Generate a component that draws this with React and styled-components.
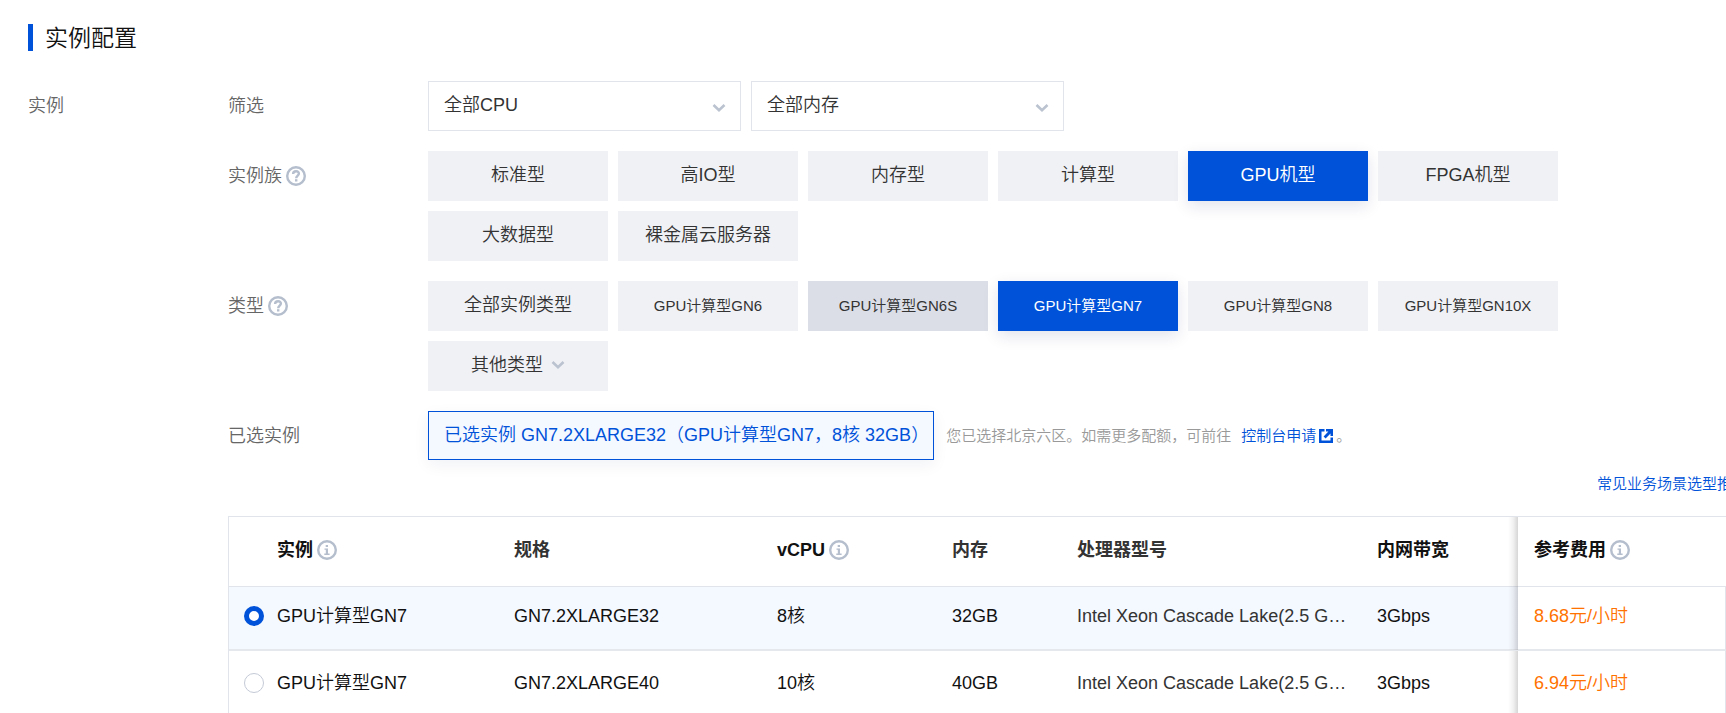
import React, { useState } from "react";
import styled, { createGlobalStyle, css } from "styled-components";

const GlobalStyle = createGlobalStyle`
  * { box-sizing: border-box; }
  html { scrollbar-width: none; }
  body {
    margin: 0;
    overflow-x: hidden;
    background: #fff;
    color: #333;
    font-family: "Liberation Sans", "Noto Sans CJK SC", sans-serif;
    font-size: 18px;
    font-weight: 350;
    line-height: 24px;
  }
  button, select, input { font: inherit; color: inherit; }
`;

const Page = styled.main`
  padding: 24px 0 0 28px;
`;

const Title = styled.h1`
  display: flex;
  align-items: center;
  margin: 0 0 30px;
  padding: 2px 0 0 12px;
  border-left: 5px solid #0052d9;
  height: 27px;
  font-size: 23px;
  font-weight: inherit;
  line-height: 27px;
  color: #111;
`;

const Section = styled.section`
  display: grid;
  grid-template-columns: 200px minmax(0, 1fr);
`;

const Label = styled.div`
  display: flex;
  align-items: center;
  gap: 4px;
  height: 50px;
  color: #666;
`;

const FormRow = styled.div`
  display: grid;
  grid-template-columns: 200px minmax(0, 1fr);
  margin-bottom: 20px;
`;

const Options = styled.div`
  display: flex;
  flex-wrap: wrap;
  gap: 10px;
  max-width: 1140px;
`;

const SelectBox = styled.label`
  position: relative;
  width: 313px;
  svg {
    position: absolute;
    right: 15px;
    top: 22px;
    pointer-events: none;
  }
`;

const Select = styled.select`
  appearance: none;
  display: block;
  width: 100%;
  height: 50px;
  padding: 0 40px 2px 15px;
  border: 1px solid #e1e4eb;
  border-radius: 0;
  background: #fff;
`;

const Chip = styled.button`
  display: flex;
  align-items: center;
  justify-content: center;
  gap: 8px;
  width: 180px;
  height: 50px;
  padding: 0 0 2px;
  border: 0;
  background: #f0f1f5;
  cursor: pointer;
  white-space: nowrap;
  ${(p) => p.$small && css`font-size: 15px; padding: 0;`}
  ${(p) => p.$hovered && css`background: #dcdee7;`}
  ${(p) => p.$active && css`
    background: #0052d9;
    color: #fff;
    box-shadow: 0 5px 15px rgba(3, 27, 108, 0.12);
  `}
`;

const SelectedLine = styled.div`
  display: flex;
  align-items: center;
  align-self: start;
  gap: 12px;
`;

const SelectedTag = styled.output`
  height: 49px;
  padding: 0 4px 0 15px;
  border: 1px solid #0052d9;
  background: #f4f8ff;
  color: #0052d9;
  line-height: 46px;
  white-space: nowrap;
  box-shadow: 0 5px 15px rgba(3, 27, 108, 0.06);
`;

const Note = styled.p`
  display: flex;
  align-items: center;
  margin: 0;
  font-size: 15px;
  color: #999;
  white-space: nowrap;
`;

const Link = styled.a`
  display: inline-flex;
  align-items: center;
  gap: 3px;
  color: #0052d9;
  font-size: 15px;
  text-decoration: none;
  white-space: nowrap;
`;

const NoteLink = styled(Link)`
  margin: 0 3px 0 10px;
`;

const Guide = styled.div`
  display: flex;
  justify-content: flex-end;
  margin: -9px -21px 20px 0;
`;

const Table = styled.table`
  width: 100%;
  table-layout: fixed;
  border-collapse: separate;
  border-spacing: 0;
  border: solid #e1e4eb;
  border-width: 1px 0 0 1px;
`;

const Col = styled.col`
  width: ${(p) => p.$width};
`;

const HeadCell = styled.th`
  height: 70px;
  padding: 0 0 3px;
  border-bottom: 1px solid #e1e4eb;
  text-align: left;
  font-weight: 700;
  color: ${(p) => (p.$strong ? "#111" : "#333")};
`;

const HeadInner = styled.span`
  display: flex;
  align-items: center;
  gap: 4px;
`;

const Cell = styled.td`
  padding: 0 0 ${(p) => (p.$selected ? 4 : 2)}px;
  border-bottom: 2px solid #e5e8ed;
  color: ${(p) => (p.$strong ? "#111" : "#333")};
`;

const pinned = css`
  position: relative;
  padding-left: 16px;
  background: #fff;
  &::before {
    content: "";
    position: absolute;
    top: 0;
    bottom: -1px;
    left: -10px;
    width: 10px;
    background: linear-gradient(to right, rgba(0, 0, 0, 0), rgba(0, 0, 0, 0.05) 50%, rgba(0, 0, 0, 0.16));
  }
`;

const PinnedHead = styled(HeadCell)`
  ${pinned}
`;

const PinnedCell = styled(Cell)`
  ${pinned}
  border-right: 1px solid #e1e4eb;
  color: #ff7200;
`;

const Row = styled.tr`
  height: ${(p) => (p.$selected ? "64px" : "68px")};
  background: ${(p) => (p.$selected ? "#f4f8ff" : "#fff")};
`;

const FirstHead = styled(HeadCell)`
  padding-left: 48px;
`;

const RadioLabel = styled.label`
  display: flex;
  align-items: center;
  gap: 13px;
  padding-left: 15px;
`;

const Radio = styled.input`
  appearance: none;
  width: 20px;
  height: 20px;
  margin: 0;
  border: 1px solid #c4cad6;
  border-radius: 50%;
  background: #fff;
  &:checked { border: 5px solid #0052d9; }
`;

const Ellipsis = styled.div`
  margin-right: 24px;
  overflow: hidden;
  text-overflow: ellipsis;
  white-space: nowrap;
`;

const Chevron = () => (
  <svg width="14" height="10" viewBox="0 0 14 10" fill="none" aria-hidden="true">
    <path d="M1.5 2L7 7.3L12.5 2" stroke="#bbc3d0" strokeWidth="2.6" />
  </svg>
);

const HelpIcon = () => (
  <svg width="20" height="20" viewBox="0 0 20 20" fill="none" aria-hidden="true">
    <circle cx="10" cy="10" r="8.8" stroke="#b4becd" strokeWidth="2.4" />
    <path d="M7.1 8.1C7.1 6.2 8.3 5.3 10.1 5.3C11.9 5.3 12.9 6.2 12.9 7.6C12.9 9.5 10.2 9.8 10.2 12.2" stroke="#b4becd" strokeWidth="2.4" />
    <rect x="9" y="13.2" width="2.4" height="2.3" fill="#b4becd" />
  </svg>
);

const InfoIcon = () => (
  <svg width="20" height="20" viewBox="0 0 20 20" fill="none" aria-hidden="true">
    <circle cx="10" cy="10" r="8.8" stroke="#b4becd" strokeWidth="2.4" />
    <path d="M8.7 5H11V7H8.7ZM7.5 8.4H11V13.4H12.6V14.9H7.3V13.4H8.8V9.8H7.5Z" fill="#b4becd" />
  </svg>
);

const ExternalIcon = () => (
  <svg width="14" height="14" viewBox="0 0 14 14" fill="none" aria-hidden="true">
    <path d="M0 0H5.5V2.5H2.5V11.5H11.5V8.5H14V14H0Z" fill="#0052d9" />
    <path d="M7 0H14V7H11.5V4.6L6.6 9.4L4.6 7.4L9.4 2.5H7Z" fill="#0052d9" />
  </svg>
);

const families = ["标准型", "高IO型", "内存型", "计算型", "GPU机型", "FPGA机型", "大数据型", "裸金属云服务器"];
const types = ["GPU计算型GN6", "GPU计算型GN6S", "GPU计算型GN7", "GPU计算型GN8", "GPU计算型GN10X"];
const instances = [
  { family: "GPU计算型GN7", spec: "GN7.2XLARGE32", cpu: "8核", memory: "32GB", processor: "Intel Xeon Cascade Lake(2.5 GHz)", bandwidth: "3Gbps", price: "8.68元/小时" },
  { family: "GPU计算型GN7", spec: "GN7.2XLARGE40", cpu: "10核", memory: "40GB", processor: "Intel Xeon Cascade Lake(2.5 GHz)", bandwidth: "3Gbps", price: "6.94元/小时" },
];

export default function App() {
  const [family, setFamily] = useState("GPU机型");
  const [type, setType] = useState("GPU计算型GN7");
  const [selected, setSelected] = useState("GN7.2XLARGE32");

  return (
    <Page>
      <GlobalStyle />
      <Title>实例配置</Title>
      <Section>
        <Label>实例</Label>
        <div>
          <FormRow>
            <Label>筛选</Label>
            <Options>
              <SelectBox>
                <Select aria-label="CPU"><option>全部CPU</option></Select>
                <Chevron />
              </SelectBox>
              <SelectBox>
                <Select aria-label="内存"><option>全部内存</option></Select>
                <Chevron />
              </SelectBox>
            </Options>
          </FormRow>
          <FormRow>
            <Label>实例族<HelpIcon /></Label>
            <Options>
              {families.map((name) => (
                <Chip key={name} type="button" $active={name === family} onClick={() => setFamily(name)}>{name}</Chip>
              ))}
            </Options>
          </FormRow>
          <FormRow>
            <Label>类型<HelpIcon /></Label>
            <Options>
              <Chip type="button">全部实例类型</Chip>
              {types.map((name) => (
                <Chip
                  key={name}
                  type="button"
                  $small
                  $hovered={name === "GPU计算型GN6S"}
                  $active={name === type}
                  onClick={() => setType(name)}
                >
                  {name}
                </Chip>
              ))}
              <Chip type="button">其他类型<Chevron /></Chip>
            </Options>
          </FormRow>
          <FormRow>
            <Label>已选实例</Label>
            <SelectedLine>
              <SelectedTag>已选实例 GN7.2XLARGE32（GPU计算型GN7，8核 32GB）</SelectedTag>
              <Note>
                您已选择北京六区。如需更多配额，可前往
                <NoteLink href="#console">控制台申请<ExternalIcon /></NoteLink>。
              </Note>
            </SelectedLine>
          </FormRow>
          <Guide><Link href="#guide">常见业务场景选型推荐</Link></Guide>
          <Table>
            <colgroup>
              <Col $width="285px" />
              <Col $width="auto" />
              <Col $width="175px" />
              <Col $width="125px" />
              <Col $width="300px" />
              <Col $width="141px" />
              <Col $width="208px" />
            </colgroup>
            <thead>
              <tr>
                <FirstHead $strong><HeadInner>实例<InfoIcon /></HeadInner></FirstHead>
                <HeadCell>规格</HeadCell>
                <HeadCell $strong><HeadInner>vCPU<InfoIcon /></HeadInner></HeadCell>
                <HeadCell>内存</HeadCell>
                <HeadCell>处理器型号</HeadCell>
                <HeadCell $strong>内网带宽</HeadCell>
                <PinnedHead $strong><HeadInner>参考费用<InfoIcon /></HeadInner></PinnedHead>
              </tr>
            </thead>
            <tbody>
              {instances.map((item) => {
                const isSelected = item.spec === selected;
                return (
                  <Row key={item.spec} $selected={isSelected}>
                    <Cell $strong $selected={isSelected}>
                      <RadioLabel>
                        <Radio
                          type="radio"
                          name="instance"
                          checked={isSelected}
                          onChange={() => setSelected(item.spec)}
                        />
                        {item.family}
                      </RadioLabel>
                    </Cell>
                    <Cell $strong $selected={isSelected}>{item.spec}</Cell>
                    <Cell $strong $selected={isSelected}>{item.cpu}</Cell>
                    <Cell $strong $selected={isSelected}>{item.memory}</Cell>
                    <Cell $selected={isSelected}><Ellipsis>{item.processor}</Ellipsis></Cell>
                    <Cell $strong $selected={isSelected}>{item.bandwidth}</Cell>
                    <PinnedCell $selected={isSelected}>{item.price}</PinnedCell>
                  </Row>
                );
              })}
            </tbody>
          </Table>
        </div>
      </Section>
    </Page>
  );
}
